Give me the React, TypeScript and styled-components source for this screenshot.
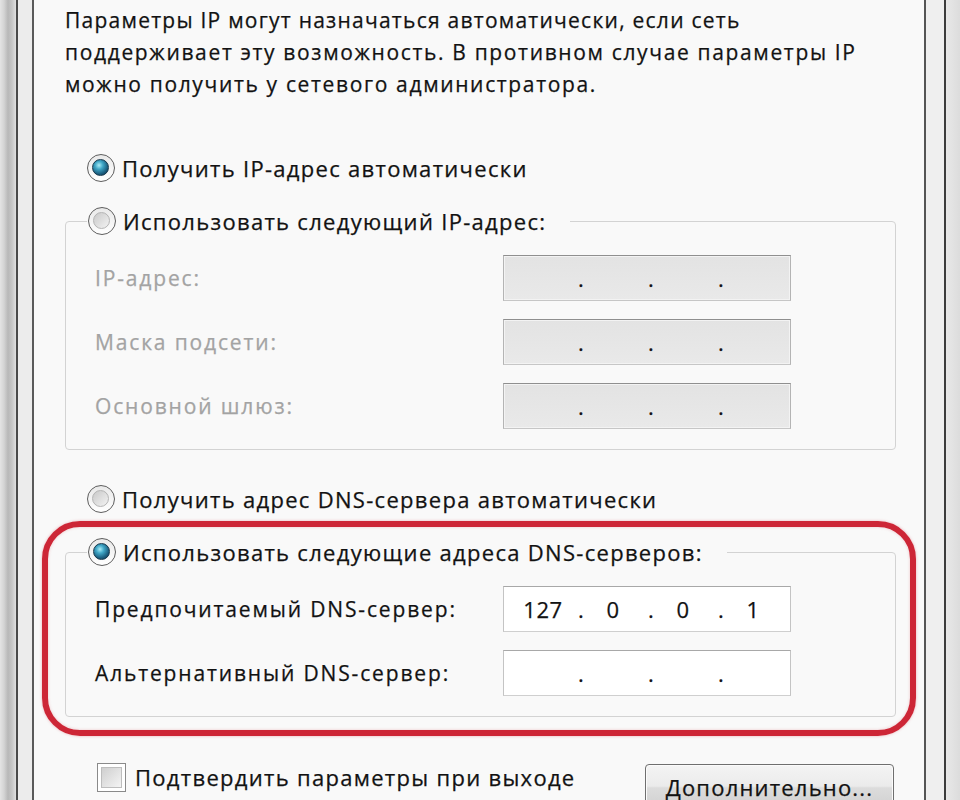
import React from 'react'
import styled, { createGlobalStyle } from 'styled-components'

const GlobalStyle = createGlobalStyle`
  html, body {
    margin: 0;
    padding: 0;
    background: #f9f9f9;
  }
  body {
    font-family: "Open Sans", "Noto Sans", "DejaVu Sans", sans-serif;
    color: #121212;
    -webkit-text-stroke: 0.25px currentColor;
  }
`

const Window = styled.div`
  display: flex;
  width: 960px;
  height: 800px;
  overflow: hidden;
`

const LeftEdge = styled.div`
  flex: none;
  width: 16px;
  background: linear-gradient(to right, #e4e4e4 0, #d4d4d4 4px, #b8b8b8 8px, #c6c6c6 12px, #e0e0e0 16px);
  border-right: 2px solid #4a4a4a;
`

const LeftStrip = styled.div`
  flex: none;
  width: 14px;
  background: #ececec;
  border-right: 2px solid #5a5a5a;
`

const RightStrip = styled.div`
  flex: none;
  width: 18px;
  background: #efefef;
  border-left: 2px solid #555;
  border-right: 2px solid #3c3c3c;
`

const RightEdge = styled.div`
  flex: 1;
  background: linear-gradient(to right, #e8e8e8, #dcdcdc);
`

const Panel = styled.div`
  flex: none;
  width: 890px;
  box-sizing: border-box;
  padding: 4px 28px 0 31px;
  background: #f9f9f9;
`

const Intro = styled.p`
  margin: 0;
  font-size: 21px;
  line-height: 32px;
  white-space: nowrap;
`

const IntroLine = styled.span<{ $spacing: number }>`
  display: block;
  letter-spacing: ${p => p.$spacing}px;
`

const RadioRow = styled.div<{ $top: number }>`
  display: flex;
  align-items: center;
  gap: 7px;
  height: 32px;
  margin-top: ${p => p.$top}px;
  padding-left: 22px;
`

const RadioCircle = styled.span<{ $checked?: boolean }>`
  flex: none;
  position: relative;
  width: 28px;
  height: 28px;
  box-sizing: border-box;
  border-radius: 50%;
  border: 1.5px solid #5e5e5e;
  background: linear-gradient(#e9e9e9, #ffffff);
  &::after {
    content: '';
    position: absolute;
    left: 4px;
    top: 4px;
    width: 17px;
    height: 17px;
    border-radius: 50%;
    box-sizing: border-box;
    border: 1px solid ${p => (p.$checked ? '#17384c' : '#b4b4b4')};
    background: ${p =>
      p.$checked
        ? 'radial-gradient(circle at 40% 35%, #a9ecf7 0, #3fa6c6 30%, #1b5f80 65%, #0e2f45 100%)'
        : 'linear-gradient(135deg, #c9c9c9, #f3f3f3)'};
  }
`

const OptionText = styled.span`
  font-size: 22px;
  line-height: 32px;
  letter-spacing: 1.3px;
  white-space: nowrap;
`

const Group = styled.fieldset<{ $top: number }>`
  margin: ${p => p.$top}px 0 0 0;
  min-width: 0;
  border: 1px solid #d3d3d3;
  border-radius: 4px;
  padding: 18px 0 20px 0;
`

const GroupTitle = styled.legend`
  display: flex;
  align-items: center;
  gap: 7px;
  height: 32px;
  margin-left: 21px;
  padding: 0 24px 0 1px;
`

const Fields = styled.div`
  display: grid;
  grid-template-columns: 408px 288px;
  row-gap: 18px;
  align-items: center;
  padding-left: 29px;
`

const FieldLabel = styled.span<{ $disabled?: boolean }>`
  font-size: 21px;
  letter-spacing: 1.85px;
  color: ${p => (p.$disabled ? '#a3a3a3' : '#121212')};
  white-space: nowrap;
`

const IpBox = styled.div<{ $disabled?: boolean }>`
  display: flex;
  align-items: center;
  height: 46px;
  box-sizing: border-box;
  padding-left: 9px;
  border: 1px solid;
  border-color: ${p => (p.$disabled ? '#8f8f8f #b4b4b4 #c6c6c6 #b4b4b4' : '#a8a8a8 #c4c4c4 #cfcfcf #c4c4c4')};
  background: ${p => (p.$disabled ? 'linear-gradient(#e3e3e3, #e9e9e9)' : '#ffffff')};
  box-shadow: ${p => (p.$disabled ? 'inset 0 0 0 1px #f3f3f3' : 'none')};
`

const Octet = styled.span`
  width: 60px;
  text-align: center;
  font-size: 22px;
  letter-spacing: 0.6px;
  color: #121212;
`

const Dot = styled.span`
  width: 10px;
  padding-left: 5px;
  box-sizing: border-box;
  font-size: 22px;
  color: #121212;
`

const DnsArea = styled.div`
  position: relative;
`

const Highlight = styled.div`
  position: absolute;
  top: -15px;
  left: -23px;
  right: -20px;
  bottom: -19px;
  border: 6px solid #cd2636;
  border-radius: 38px;
  box-shadow: 0 0 3px rgba(205, 38, 54, 0.35), inset 0 0 3px rgba(205, 38, 54, 0.25);
  pointer-events: none;
`

const BottomRow = styled.div`
  display: flex;
  justify-content: space-between;
  align-items: flex-start;
  margin-top: 44px;
`

const CheckLine = styled.label`
  display: flex;
  align-items: center;
  gap: 9px;
  height: 32px;
  padding-left: 32px;
`

const CheckSquare = styled.span`
  flex: none;
  width: 29px;
  height: 29px;
  box-sizing: border-box;
  border: 1.5px solid #8a8a8a;
  background: #ffffff;
  padding: 3px;
  &::after {
    content: '';
    display: block;
    width: 100%;
    height: 100%;
    box-sizing: border-box;
    border: 1px solid #bdbdbd;
    background: linear-gradient(135deg, #cfcfcf, #f4f4f4);
  }
`

const Button = styled.button`
  width: 249px;
  height: 46px;
  margin: 3px 2px 0 0;
  border: 1px solid #6f6f6f;
  border-radius: 4px;
  background: linear-gradient(#f4f4f4 0, #ebebeb 48%, #dcdcdc 52%, #d0d0d0 100%);
  box-shadow: inset 0 0 0 1px #fbfbfb;
  font-family: inherit;
  font-size: 22px;
  letter-spacing: 1.2px;
  color: #121212;
  padding: 0;
  -webkit-text-stroke: 0.25px currentColor;
`

type Row = { label: string; octets: string[] }

const introLines = [
  { text: 'Параметры IP могут назначаться автоматически, если сеть', spacing: 1.25 },
  { text: 'поддерживает эту возможность. В противном случае параметры IP', spacing: 1.65 },
  { text: 'можно получить у сетевого администратора.', spacing: 1.65 },
]

const staticRows: Row[] = [
  { label: 'IP-адрес:', octets: ['', '', '', ''] },
  { label: 'Маска подсети:', octets: ['', '', '', ''] },
  { label: 'Основной шлюз:', octets: ['', '', '', ''] },
]

const dnsRows: Row[] = [
  { label: 'Предпочитаемый DNS-сервер:', octets: ['127', '0', '0', '1'] },
  { label: 'Альтернативный DNS-сервер:', octets: ['', '', '', ''] },
]

function IpInput({ octets, disabled }: { octets: string[]; disabled?: boolean }) {
  return (
    <IpBox $disabled={disabled}>
      {octets.map((o, i) => (
        <React.Fragment key={i}>
          <Octet>{o}</Octet>
          {i < 3 && <Dot>.</Dot>}
        </React.Fragment>
      ))}
    </IpBox>
  )
}

export default function App() {
  return (
    <>
      <GlobalStyle />
      <Window>
        <LeftEdge />
        <LeftStrip />
        <Panel>
          <Intro>
            {introLines.map(l => (
              <IntroLine key={l.text} $spacing={l.spacing}>
                {l.text}
              </IntroLine>
            ))}
          </Intro>

          <RadioRow $top={52}>
            <RadioCircle $checked />
            <OptionText>Получить IP-адрес автоматически</OptionText>
          </RadioRow>

          <Group $top={21}>
            <GroupTitle>
              <RadioCircle />
              <OptionText>Использовать следующий IP-адрес:</OptionText>
            </GroupTitle>
            <Fields>
              {staticRows.map(r => (
                <React.Fragment key={r.label}>
                  <FieldLabel $disabled>{r.label}</FieldLabel>
                  <IpInput octets={r.octets} disabled />
                </React.Fragment>
              ))}
            </Fields>
          </Group>

          <RadioRow $top={33}>
            <RadioCircle />
            <OptionText>Получить адрес DNS-сервера автоматически</OptionText>
          </RadioRow>

          <DnsArea>
            <Group $top={21}>
              <GroupTitle>
                <RadioCircle $checked />
                <OptionText>Использовать следующие адреса DNS-серверов:</OptionText>
              </GroupTitle>
              <Fields>
                {dnsRows.map(r => (
                  <React.Fragment key={r.label}>
                    <FieldLabel>{r.label}</FieldLabel>
                    <IpInput octets={r.octets} />
                  </React.Fragment>
                ))}
              </Fields>
            </Group>
            <Highlight />
          </DnsArea>

          <BottomRow>
            <CheckLine>
              <CheckSquare />
              <OptionText>Подтвердить параметры при выходе</OptionText>
            </CheckLine>
            <Button>Дополнительно...</Button>
          </BottomRow>
        </Panel>
        <RightStrip />
        <RightEdge />
      </Window>
    </>
  )
}
